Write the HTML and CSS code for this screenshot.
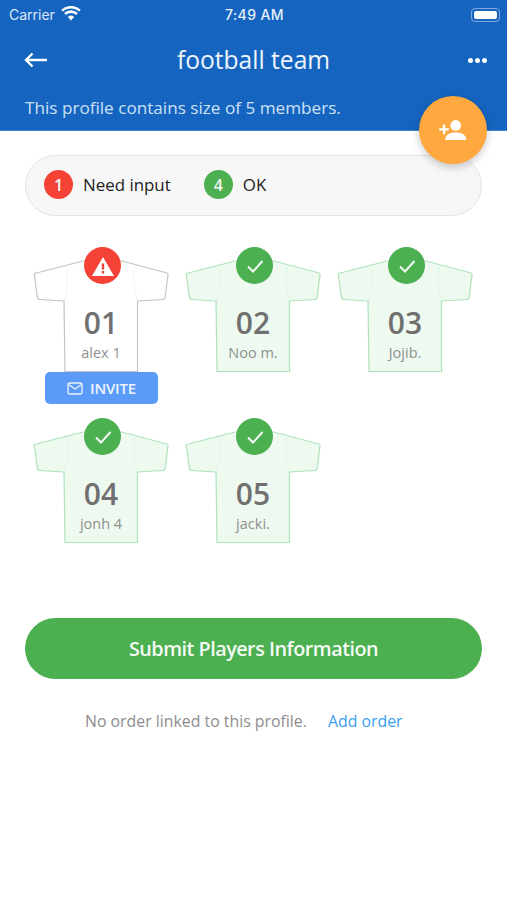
FILE: index.html
```html
<!DOCTYPE html>
<html lang="en">
<head>
<meta charset="utf-8">
<title>football team</title>
<link rel="stylesheet" href="styles.css">
</head>
<body>
<svg class="defs" width="0" height="0" aria-hidden="true">
  <symbol id="shirt" viewBox="0 0 136 116">
    <path class="shirt-body" d="M50 3 L1.500 15.500 Q1 16 1.500 18 L4.500 40 Q5 41.500 7 41.500 L31 43 L32 113.500 L104.500 113.500 L104.500 43 L130 41.500 Q131.500 41.500 132 40 L135 17 Q135.500 15.500 134 15 L89 3 Z"/>
    <path class="shirt-seam" d="M33 8 Q37 26 31 43 M102 8 Q99 26 104.500 43"/>
  </symbol>
</svg>
<div class="app">
  <header class="header">
    <div class="status">
      <div class="status-left">
        <span class="carrier">Carrier</span>
        <svg class="wifi" viewBox="0 0 20 15" width="20" height="15"><path d="M10 14.500 L6.900 11 A4.600 4.600 0 0 1 13.100 11 Z"/><path d="M4.900 8.900 A7.600 7.600 0 0 1 15.100 8.900 L16.800 7 A10.100 10.100 0 0 0 3.200 7 Z"/><path d="M1.900 5.600 A12 12 0 0 1 18.100 5.600 L19.800 3.700 A14.600 14.600 0 0 0 .2 3.700 Z"/></svg>
      </div>
      <span class="clock">7:49 AM</span>
      <div class="battery"><span class="battery-fill"></span></div>
    </div>
    <div class="nav">
      <svg class="back" viewBox="0 0 24 16" width="24" height="16"><path d="M2 8 H23 M8.500 1.500 L2 8 L8.500 14.500"/></svg>
      <h1 class="title">football team</h1>
      <div class="dots"><i></i><i></i><i></i></div>
    </div>
    <p class="subtitle">This profile contains size of 5 members.</p>
  </header>
  <button class="fab" aria-label="Add member">
    <svg viewBox="0 0 30 24" width="28" height="22"><circle cx="18" cy="7" r="5.800"/><path d="M6.500 23 C6.500 16.500 13 14.800 18 14.800 C23 14.800 29.500 16.500 29.500 23 Z"/><path d="M0 10 H4 V6 H6.500 V10 H10.500 V12.500 H6.500 V16.500 H4 V12.500 H0 Z"/></svg>
  </button>
  <main class="content">
    <div class="legend">
      <span class="legend-num red">1</span><span class="legend-label">Need input</span>
      <span class="legend-num green second">4</span><span class="legend-label">OK</span>
    </div>
    <div class="players">
      <div class="player pending">
        <svg class="shirt"><use href="#shirt"/></svg>
        <span class="badge red"><svg viewBox="0 0 24 24" width="24" height="24"><path class="warn" d="M12 3 L23 22 H1 Z M10.800 9.500 V15.500 H13.200 V9.500 Z M10.800 17 V19.500 H13.200 V17 Z"/></svg></span>
        <div class="info"><span class="num">01</span><span class="name">alex 1</span></div>
        <button class="invite"><svg viewBox="0 0 16 13" width="16" height="13"><rect x="1" y="1" width="14" height="11" rx="1.500"/><path d="M1.500 2.500 L8 7 L14.500 2.500"/></svg>INVITE</button>
      </div>
      <div class="player ok">
        <svg class="shirt"><use href="#shirt"/></svg>
        <span class="badge green"><svg viewBox="0 0 24 24" width="24" height="24"><path class="check" d="M5 12.500 L10 17.500 L19.500 7"/></svg></span>
        <div class="info"><span class="num">02</span><span class="name">Noo m.</span></div>
      </div>
      <div class="player ok">
        <svg class="shirt"><use href="#shirt"/></svg>
        <span class="badge green"><svg viewBox="0 0 24 24" width="24" height="24"><path class="check" d="M5 12.500 L10 17.500 L19.500 7"/></svg></span>
        <div class="info"><span class="num">03</span><span class="name">Jojib.</span></div>
      </div>
      <div class="player ok">
        <svg class="shirt"><use href="#shirt"/></svg>
        <span class="badge green"><svg viewBox="0 0 24 24" width="24" height="24"><path class="check" d="M5 12.500 L10 17.500 L19.500 7"/></svg></span>
        <div class="info"><span class="num">04</span><span class="name">jonh 4</span></div>
      </div>
      <div class="player ok">
        <svg class="shirt"><use href="#shirt"/></svg>
        <span class="badge green"><svg viewBox="0 0 24 24" width="24" height="24"><path class="check" d="M5 12.500 L10 17.500 L19.500 7"/></svg></span>
        <div class="info"><span class="num">05</span><span class="name">jacki.</span></div>
      </div>
    </div>
    <button class="submit">Submit Players Information</button>
    <p class="order"><span>No order linked to this profile.</span><a href="#">Add order</a></p>
  </main>
</div>
</body>
</html>
```

FILE: styles.css
```css
* { box-sizing: border-box; }
html, body { margin: 0; padding: 0; background: #fff; }
body { font-family: "Open Sans", sans-serif; width: 507px; height: 900px; overflow: hidden; }
.defs { position: absolute; }
.app { position: relative; height: 900px; }

.header { height: 131px; background: #1565c0; color: #fff; border-bottom: 1px solid #3d82cf; }
.status { height: 28px; padding: 2px 7px 0 9px; display: grid; grid-template-columns: 1fr auto 1fr; align-items: center; }
.status-left { display: flex; align-items: center; gap: 6px; }
.carrier { font: 14px/18px Inter, "Liberation Sans", sans-serif; color: #dbe7f5; }
.wifi { fill: #fff; margin-top: -3px; }
.clock { font: 500 14px/18px Inter, "Liberation Sans", sans-serif; letter-spacing: .4px; color: #e8f0fa; }
.battery { justify-self: end; width: 29px; height: 14px; border: 1px solid #7fa8dc; border-radius: 4px; padding: 2px; margin-top: -1px; }
.battery-fill { display: block; height: 100%; background: #fff; border-radius: 2px; }

.nav { height: 52px; padding: 12px 24px 0; display: grid; grid-template-columns: 1fr auto 1fr; align-items: center; }
.back { fill: none; stroke: #fff; stroke-width: 2.400; }
.title { margin: 0; font-size: 24.600px; line-height: 32px; font-weight: 400; color: #eef4fb; }
.dots { justify-self: end; display: flex; gap: 2px; margin-right: -4px; }
.dots i { width: 5px; height: 5px; border-radius: 50%; background: #fff; }
.subtitle { margin: 16px 0 0 25px; font-size: 17.150px; line-height: 24px; color: #cfe0f5; }

.fab { position: absolute; left: 419px; top: 96px; width: 68px; height: 68px; border: 0; border-radius: 50%; padding: 0; background: #ffa83f; box-shadow: 0 3px 8px rgba(0,0,0,.22); display: flex; align-items: center; justify-content: center; }
.fab svg { fill: #fff; }

.content { padding: 24px 25px 0; }
.legend { height: 61px; background: #f7f7f7; border: 1px solid #e3e3e3; border-radius: 31px; display: flex; align-items: center; padding: 0 0 2px 18px; }
.legend-num { width: 29px; height: 29px; border-radius: 50%; color: #f5f5f5; font-size: 16px; font-weight: 600; display: flex; align-items: center; justify-content: center; }
.legend-label { margin-left: 10px; font-size: 16.900px; color: #222; }
.legend-num.second { margin-left: 33px; }
.red { background: #f44336; }
.green { background: #4caf50; }

.players { margin: 28px 0 0 8px; display: grid; grid-template-columns: repeat(3, 152px); grid-auto-rows: 171px; }
.player { position: relative; width: 136px; height: 171px; display: flex; flex-direction: column; align-items: center; }
.shirt { position: absolute; left: 0; top: 14px; width: 136px; height: 116px; }
.shirt-body { fill: var(--shirt-fill); stroke: var(--shirt-line); stroke-width: 1.200; }
.shirt-seam { fill: none; stroke: var(--shirt-seam); stroke-width: .8; }
.pending { --shirt-fill: #fff; --shirt-line: #c4c4c4; --shirt-seam: #efefef; }
.ok { --shirt-fill: #eefaf0; --shirt-line: #aee3ba; --shirt-seam: #e0f4e4; }
.badge { position: absolute; left: 51px; top: 3px; width: 37px; height: 37px; border-radius: 50%; display: flex; align-items: center; justify-content: center; }
.warn { fill: #fff; fill-rule: evenodd; }
.check { fill: none; stroke: #f1f8f1; stroke-width: 2; }
.info { position: relative; margin-top: 60px; display: flex; flex-direction: column; align-items: center; }
.num { font-size: 30px; line-height: 38px; font-weight: 600; color: #707070; }
.name { font-size: 14.500px; line-height: 20px; color: #8f8f8f; margin-top: 1px; }
.invite { position: absolute; left: 12px; top: 128px; width: 113px; height: 32px; border: 0; border-radius: 5px; background: #5b9bf8; color: #edf4ff; font: 600 15px "Open Sans", sans-serif; letter-spacing: -.2px; display: flex; align-items: center; justify-content: center; gap: 7px; padding: 0; }
.invite svg { fill: none; stroke: #edf4ff; stroke-width: 1.300; }

.submit { display: block; width: 457px; height: 61px; margin: 32px 0 0; border: 0; border-radius: 31px; background: #4caf50; color: #f4faf4; font: 600 19.800px "Open Sans", sans-serif; letter-spacing: -.5px; }
.order { margin: 30px 0 0; padding-left: 60px; font-size: 15.850px; line-height: 24px; color: #8d8d8d; display: flex; gap: 21px; }
.order a { color: #3a9ff0; text-decoration: none; }
```
